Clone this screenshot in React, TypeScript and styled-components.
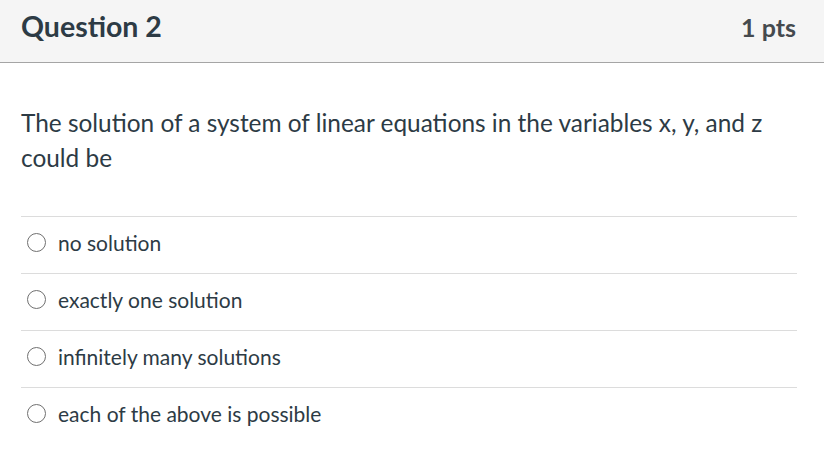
import styled, { createGlobalStyle } from 'styled-components';

const GlobalStyle = createGlobalStyle`
  body {
    margin: 0;
    background: #ffffff;
    font-family: Lato, "Liberation Sans", sans-serif;
    color: #2d3b45;
  }
`;

const Card = styled.div`
  width: 824px;
`;

const Header = styled.div`
  box-sizing: border-box;
  display: flex;
  align-items: baseline;
  justify-content: space-between;
  height: 63px;
  padding: 9px 28px 0 21px;
  background: #f5f5f5;
  border-bottom: 1px solid #a5a5a5;
`;

const Title = styled.h2`
  margin: 0;
  font-size: 28.5px;
  font-weight: 700;
  color: #2d3b45;
`;

const Points = styled.span`
  font-size: 25px;
  font-weight: 700;
  color: #454a4e;
`;

const Body = styled.div`
  padding: 42px 27px 0 21px;
`;

const QuestionText = styled.p`
  margin: 0 0 41px;
  font-size: 24.4px;
  line-height: 35px;
`;

const AnswerList = styled.div`
  display: flex;
  flex-direction: column;
`;

const Answer = styled.label`
  box-sizing: border-box;
  display: flex;
  align-items: center;
  gap: 12px;
  height: 57px;
  padding: 0 0 6px 6px;
  border-top: 1px solid #dcdcdc;
  font-size: 21px;
  cursor: pointer;
`;

const Radio = styled.span`
  box-sizing: border-box;
  width: 19px;
  height: 19px;
  border: 1.5px solid #707070;
  border-radius: 50%;
  flex-shrink: 0;
`;

const answers = ['no solution', 'exactly one solution', 'infinitely many solutions', 'each of the above is possible'];

const App = () => {
  return (
    <>
      <GlobalStyle />
      <Card>
        <Header>
          <Title>Question 2</Title>
          <Points>1 pts</Points>
        </Header>
        <Body>
          <QuestionText>
            The solution of a system of linear equations in the variables x, y, and z could be
          </QuestionText>
          <AnswerList>
            {answers.map((a) => (
              <Answer key={a}>
                <Radio />
                {a}
              </Answer>
            ))}
          </AnswerList>
        </Body>
      </Card>
    </>
  );
};

export default App;
